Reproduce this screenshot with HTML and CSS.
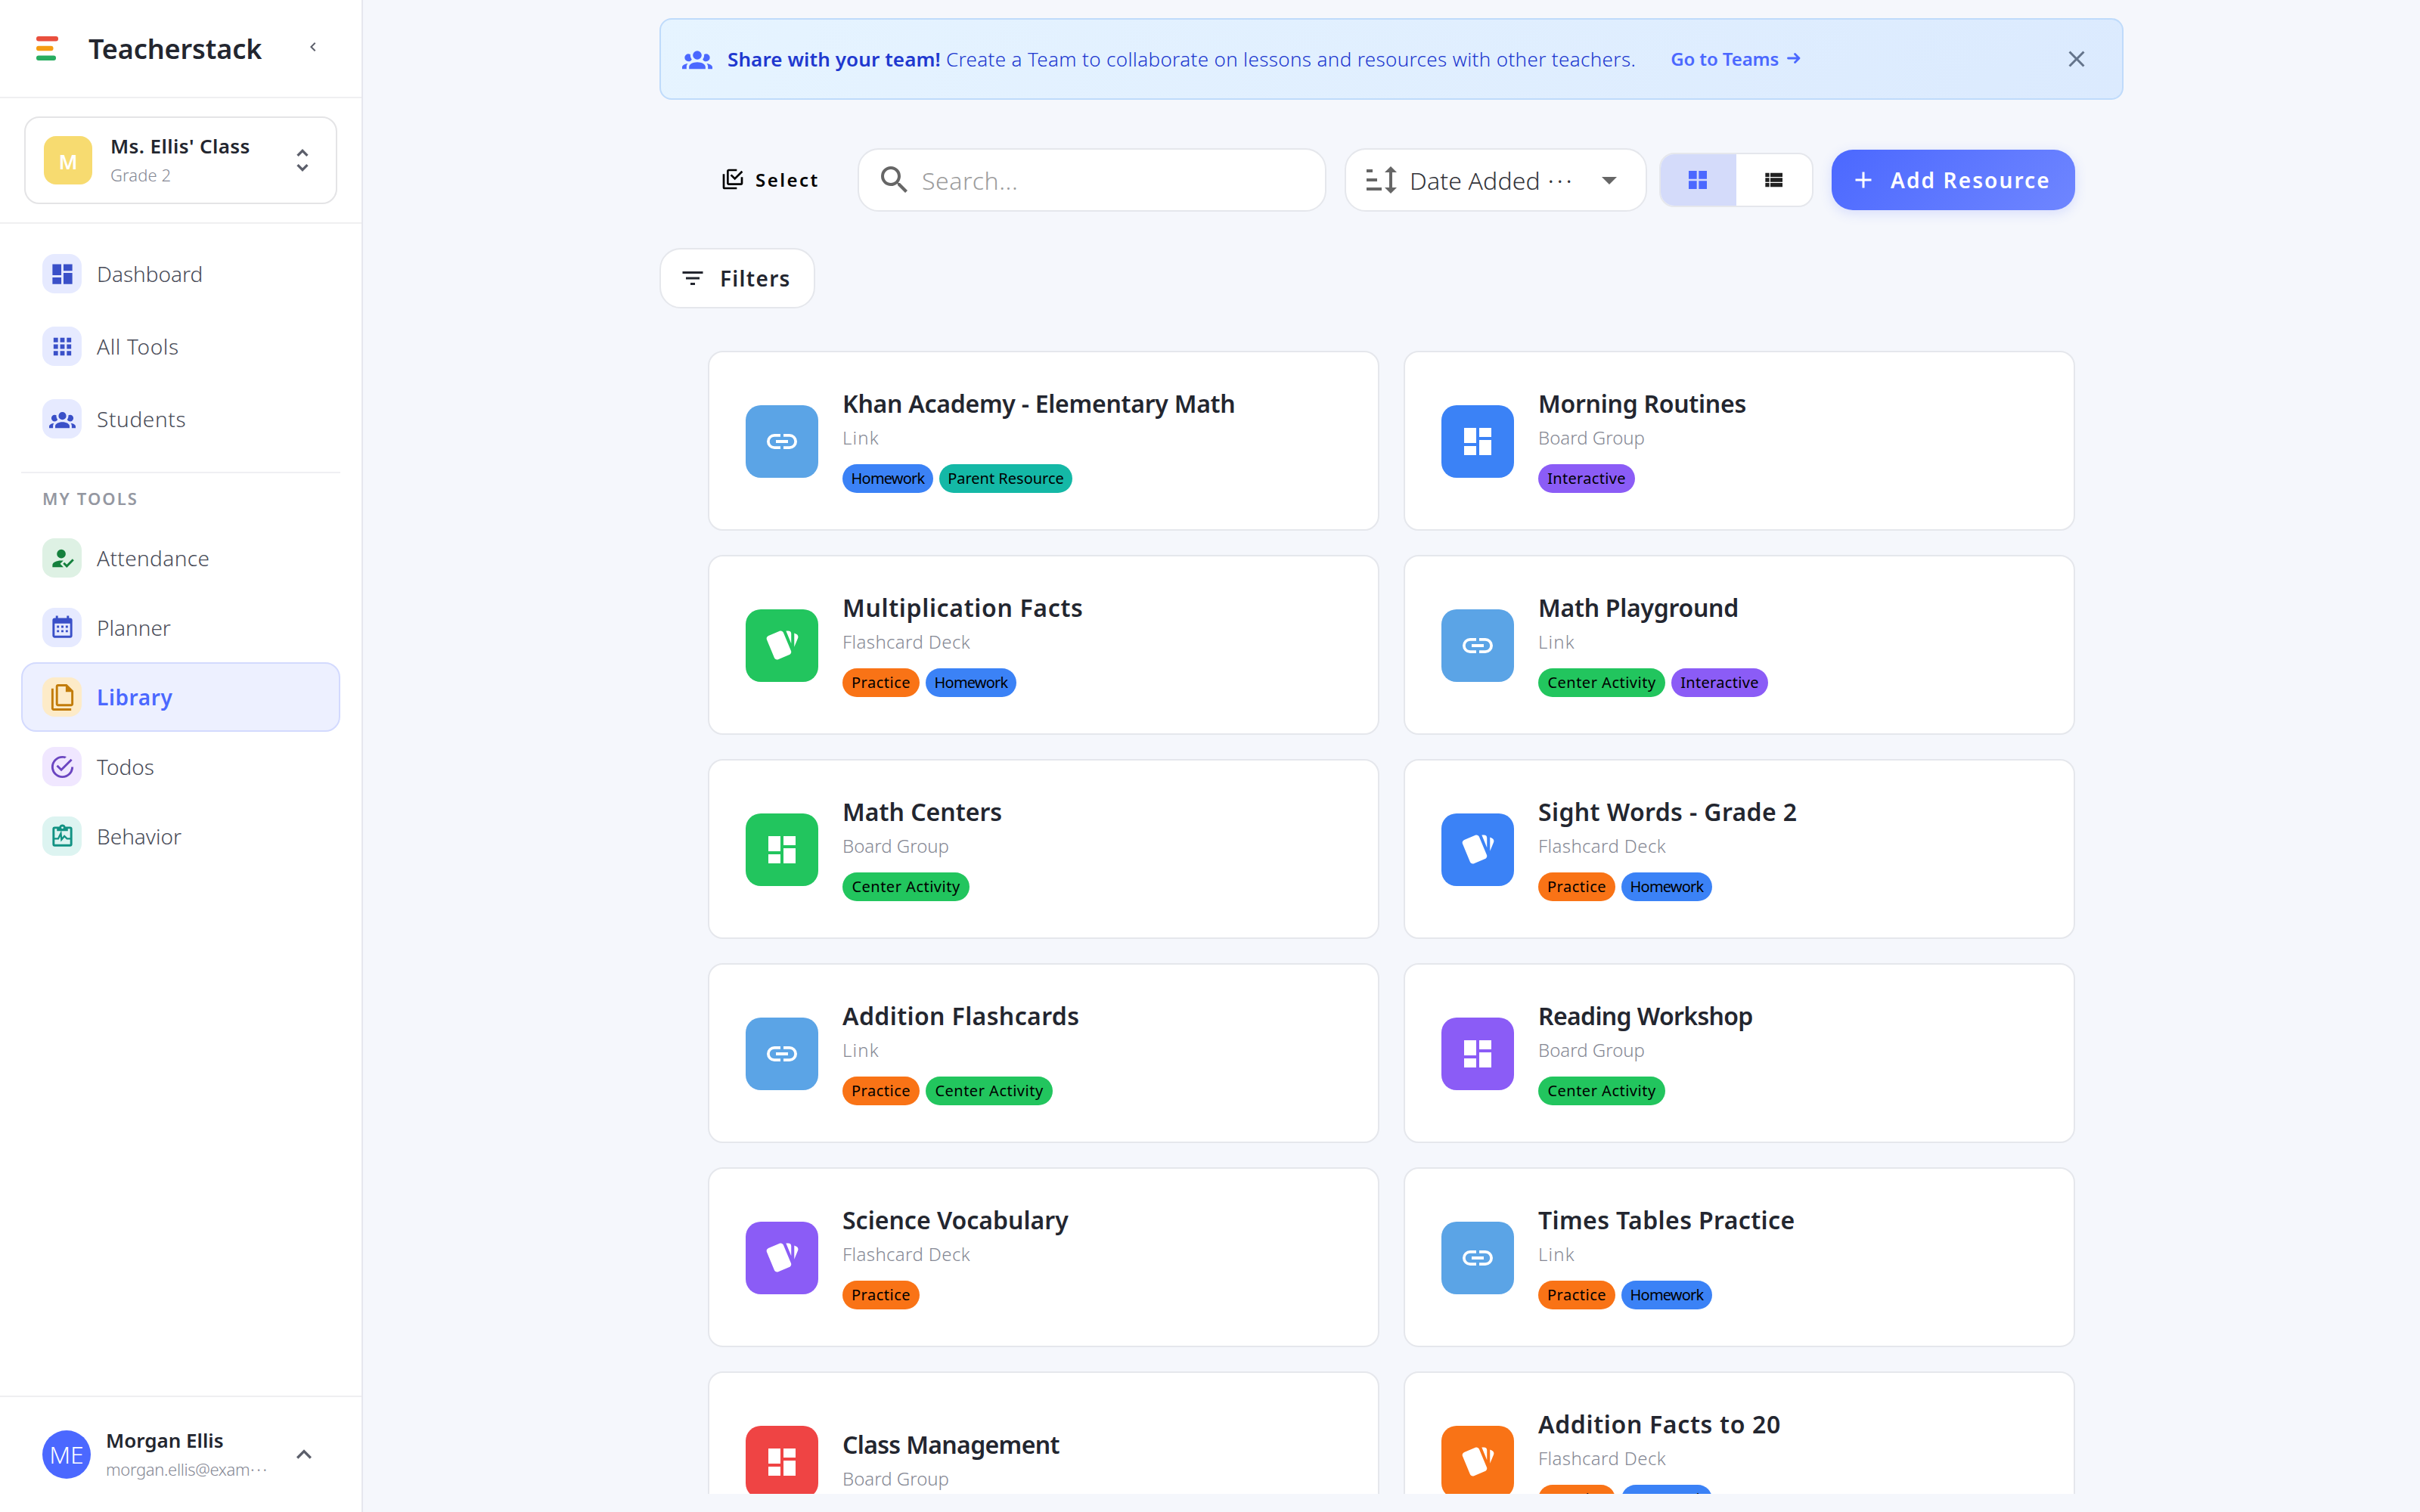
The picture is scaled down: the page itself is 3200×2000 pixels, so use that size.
FILE: index.html
```
<!DOCTYPE html>
<html lang="en">
<head>
    <meta charset="utf-8">
    <title>Teacherstack - Library</title>
    <link rel="stylesheet" href="styles.css">
</head>
<body>
    <!-- Icon set -->
    <svg class="sprite">
        <symbol id="i-dashboard" viewBox="0 0 24 24"><path d="M13,3V9H21V3M13,21H21V11H13M3,21H11V15H3M3,13H11V3H3V13Z"/></symbol>
        <symbol id="i-apps" viewBox="0 0 24 24"><path d="M16,20H20V16H16M16,14H20V10H16M10,8H14V4H10M16,8H20V4H16M10,14H14V10H10M4,14H8V10H4M4,20H8V16H4M10,20H14V16H10M4,8H8V4H4V8Z"/></symbol>
        <symbol id="i-group" viewBox="0 0 24 24"><path d="M12,5.5A3.5,3.5 0 0,1 15.5,9A3.5,3.5 0 0,1 12,12.5A3.5,3.5 0 0,1 8.5,9A3.5,3.5 0 0,1 12,5.5M5,8C5.56,8 6.08,8.15 6.53,8.42C6.38,9.85 6.8,11.27 7.66,12.38C7.16,13.34 6.16,14 5,14A3,3 0 0,1 2,11A3,3 0 0,1 5,8M19,8A3,3 0 0,1 22,11A3,3 0 0,1 19,14C17.84,14 16.84,13.34 16.34,12.38C17.2,11.27 17.62,9.85 17.47,8.42C17.92,8.15 18.44,8 19,8M5.5,18.25C5.5,16.18 8.41,14.5 12,14.5C15.59,14.5 18.5,16.18 18.5,18.25V20H5.5V18.25M0,20V18.5C0,17.11 1.89,15.94 4.45,15.6C3.86,16.28 3.5,17.22 3.5,18.25V20H0M24,20H20.5V18.25C20.5,17.22 20.14,16.28 19.55,15.6C22.11,15.94 24,17.11 24,18.5V20Z"/></symbol>
        <symbol id="i-account-check" viewBox="0 0 24 24"><path d="M21.1,12.5L22.5,13.91L15.97,20.5L12.5,17L13.9,15.59L15.97,17.67L21.1,12.5M10,17L13,20H3V18C3,15.79 6.58,14 11,14L12.89,14.11L10,17M11,4A4,4 0 0,1 15,8A4,4 0 0,1 11,12A4,4 0 0,1 7,8A4,4 0 0,1 11,4Z"/></symbol>
        <symbol id="i-calendar" viewBox="0 0 24 24"><path d="M9,10V12H7V10H9M13,10V12H11V10H13M17,10V12H15V10H17M19,3A2,2 0 0,1 21,5V19A2,2 0 0,1 19,21H5C3.89,21 3,20.1 3,19V5A2,2 0 0,1 5,3H6V1H8V3H16V1H18V3H19M19,19V8H5V19H19M9,14V16H7V14H9M13,14V16H11V14H13M17,14V16H15V14H17Z"/></symbol>
        <symbol id="i-files" viewBox="0 0 24 24"><path d="M16,0H8C6.9,0 6,0.9 6,2V18C6,19.1 6.9,20 8,20H20C21.1,20 22,19.1 22,18V6L16,0M20,18H8V2H15V7H20V18M4,4V22H20V24H4C2.9,24 2,23.1 2,22V4H4Z"/></symbol>
        <symbol id="i-check-circle" viewBox="0 0 24 24"><path d="M20,12A8,8 0 0,1 12,20A8,8 0 0,1 4,12A8,8 0 0,1 12,4C12.76,4 13.5,4.11 14.2,4.31L15.77,2.74C14.61,2.26 13.34,2 12,2A10,10 0 0,0 2,12A10,10 0 0,0 12,22A10,10 0 0,0 22,12M7.91,10.08L6.5,11.5L11,16L21,6L19.59,4.58L11,13.17L7.91,10.08Z"/></symbol>
        <symbol id="i-pulse" viewBox="0 0 24 24">
            <path fill-rule="evenodd" d="M19,3H14.82C14.4,1.84 13.3,1 12,1S9.6,1.84 9.18,3H5A2,2 0 0,0 3,5V19A2,2 0 0,0 5,21H19A2,2 0 0,0 21,19V5A2,2 0 0,0 19,3M12,3A1,1 0 0,1 12,5A1,1 0 0,1 12,3M5,5H7V7H17V5H19V19H5Z"/>
            <path fill="none" stroke="currentColor" stroke-width="1.6" d="M4,14H8.2L10.6,9.2L11.2,14.8L13.8,11.6L16.2,14H20"/>
        </symbol>
        <symbol id="i-chevron-up" viewBox="0 0 24 24"><path d="M7.41,15.41L12,10.83L16.59,15.41L18,14L12,8L6,14L7.41,15.41Z"/></symbol>
        <symbol id="i-chevron-left" viewBox="0 0 24 24"><path d="M15.41,16.58L10.83,12L15.41,7.41L14,6L8,12L14,18L15.41,16.58Z"/></symbol>
        <symbol id="i-unfold" viewBox="0 0 24 24"><path d="M12,18.17L8.83,15L7.42,16.41L12,21L16.59,16.41L15.17,15M12,5.83L15.17,9L16.58,7.59L12,3L7.41,7.59L8.83,9L12,5.83Z"/></symbol>
        <symbol id="i-magnify" viewBox="0 0 24 24"><path d="M9.5,3A6.5,6.5 0 0,1 16,9.5C16,11.11 15.41,12.59 14.44,13.73L14.71,14H15.5L20.5,19L19,20.5L14,15.5V14.71L13.73,14.44C12.59,15.41 11.11,16 9.5,16A6.5,6.5 0 0,1 3,9.5A6.5,6.5 0 0,1 9.5,3M9.5,5C7,5 5,7 5,9.5C5,12 7,14 9.5,14C12,14 14,12 14,9.5C14,7 12,5 9.5,5Z"/></symbol>
        <symbol id="i-sort" viewBox="0 0 24 24"><path d="M18,21L14,17H17V7H14L18,3L22,7H19V17H22M2,19V17H12V19M2,13V11H9V13M2,7V5H6V7H2Z"/></symbol>
        <symbol id="i-menu-down" viewBox="0 0 24 24"><path d="M7,10L12,15L17,10H7Z"/></symbol>
        <symbol id="i-grid" viewBox="0 0 24 24"><path d="M3,11H11V3H3M3,21H11V13H3M13,21H21V13H13M13,3V11H21V3"/></symbol>
        <symbol id="i-list" viewBox="0 0 24 24"><path d="M9,5V9H21V5M9,19H21V15H9M9,14H21V10H9M4,9H8V5H4M4,19H8V15H4M4,14H8V10H4V14Z"/></symbol>
        <symbol id="i-plus" viewBox="0 0 24 24"><path d="M19,13H13V19H11V13H5V11H11V5H13V11H19V13Z"/></symbol>
        <symbol id="i-close" viewBox="0 0 24 24"><path d="M19,6.41L17.59,5L12,10.59L6.41,5L5,6.41L10.59,12L5,17.59L6.41,19L12,13.41L17.59,19L19,17.59L13.41,12L19,6.41Z"/></symbol>
        <symbol id="i-filter" viewBox="0 0 24 24"><path d="M6,13H18V11H6M3,6V8H21V6M10,18H14V16H10V18Z"/></symbol>
        <symbol id="i-select" viewBox="0 0 24 24"><path d="M20,16V10H22V16A2,2 0 0,1 20,18H8C6.89,18 6,17.1 6,16V4C6,2.89 6.89,2 8,2H16V4H8V16H20M10.91,7.08L14,10.17L20.59,3.58L22,5L14,13L9.5,8.5L10.91,7.08M16,20V22H4A2,2 0 0,1 2,20V7H4V20H16Z"/></symbol>
        <symbol id="i-link" viewBox="0 0 24 24"><path d="M3.9,12C3.9,10.29 5.29,8.9 7,8.9H11V7H7A5,5 0 0,0 2,12A5,5 0 0,0 7,17H11V15.1H7C5.29,15.1 3.9,13.71 3.9,12M8,13H16V11H8V13M17,7H13V8.9H17C18.71,8.9 20.1,10.29 20.1,12C20.1,13.71 18.71,15.1 17,15.1H13V17H17A5,5 0 0,0 22,12A5,5 0 0,0 17,7Z"/></symbol>
        <symbol id="i-cards" viewBox="0 0 24 24"><path d="M21.47,4.35L20.13,3.79V12.82L22.56,6.96C22.97,5.94 22.5,4.77 21.47,4.35M1.97,8.05L6.93,20C7.24,20.77 7.97,21.24 8.74,21.26C9,21.26 9.27,21.21 9.53,21.1L16.9,18.05C17.65,17.74 18.11,17 18.13,16.26C18.14,16 18.09,15.71 18,15.45L13,3.5C12.71,2.73 11.97,2.26 11.19,2.25C10.93,2.25 10.67,2.31 10.42,2.4L3.06,5.45C2.04,5.87 1.55,7.04 1.97,8.05M18.12,4.25A2,2 0 0,0 16.12,2.25H14.67L18.12,10.59"/></symbol>
    </svg>

    <div class="app">
        <aside class="sidebar">
            <div class="brand">
                <svg class="logo" viewBox="0 0 30 32">
                    <rect width="29" height="6.5" rx="3" fill="#e94f3d"/>
                    <rect y="12.75" width="22.5" height="6.5" rx="3" fill="#f59c12"/>
                    <rect y="25.5" width="26" height="6.5" rx="3" fill="#28ad60"/>
                </svg>
                <span class="brand-name">Teacherstack</span>
                <svg class="icon brand-toggle"><use href="#i-chevron-left"/></svg>
            </div>

            <div class="class-picker">
                <div class="class-card">
                    <div class="class-avatar">M</div>
                    <div class="class-text">
                        <div class="class-name">Ms. Ellis' Class</div>
                        <div class="class-grade">Grade 2</div>
                    </div>
                    <svg class="icon icon-40 muted"><use href="#i-unfold"/></svg>
                </div>
            </div>

            <nav class="nav nav-main">
                <a class="nav-item"><span class="nav-icon blue"><svg class="icon"><use href="#i-dashboard"/></svg></span><span>Dashboard</span></a>
                <a class="nav-item"><span class="nav-icon blue"><svg class="icon"><use href="#i-apps"/></svg></span><span class="ls-wide">All Tools</span></a>
                <a class="nav-item"><span class="nav-icon blue"><svg class="icon"><use href="#i-group"/></svg></span><span class="ls-wide">Students</span></a>
            </nav>
            <nav class="nav nav-tools">
                <div class="nav-title">MY TOOLS</div>
                <a class="nav-item"><span class="nav-icon green"><svg class="icon"><use href="#i-account-check"/></svg></span><span class="ls-mid">Attendance</span></a>
                <a class="nav-item"><span class="nav-icon blue"><svg class="icon"><use href="#i-calendar"/></svg></span><span>Planner</span></a>
                <a class="nav-item active"><span class="nav-icon amber"><svg class="icon"><use href="#i-files"/></svg></span><span class="ls-mid">Library</span></a>
                <a class="nav-item"><span class="nav-icon purple"><svg class="icon"><use href="#i-check-circle"/></svg></span><span>Todos</span></a>
                <a class="nav-item"><span class="nav-icon teal"><svg class="icon"><use href="#i-pulse"/></svg></span><span>Behavior</span></a>
            </nav>

            <div class="user">
                <div class="user-avatar">ME</div>
                <div class="user-text">
                    <div class="user-name">Morgan Ellis</div>
                    <div class="user-mail">morgan.ellis@exam<span class="dots">…</span></div>
                </div>
                <svg class="icon icon-40 muted"><use href="#i-chevron-up"/></svg>
            </div>
        </aside>

        <main class="main">
            <div class="page">
                <div class="banner">
                    <svg class="icon icon-40 banner-icon"><use href="#i-group"/></svg>
                    <div class="banner-text"><strong>Share with your team!</strong> Create a Team to collaborate on lessons and resources with other teachers.</div>
                    <a class="banner-link">Go to Teams <svg class="arrow" viewBox="0 0 18 16"><path d="M1.5,8H16M10.5,2.5L16,8L10.5,13.5"/></svg></a>
                    <svg class="icon icon-36 banner-close"><use href="#i-close"/></svg>
                </div>

                <div class="toolbar">
                    <button class="select-btn"><svg class="icon"><use href="#i-select"/></svg>Select</button>
                    <div class="search"><svg class="icon icon-48"><use href="#i-magnify"/></svg><span>Search...</span></div>
                    <div class="sort">
                        <svg class="icon icon-48"><use href="#i-sort"/></svg>
                        <span class="sort-text">Date Added <span class="dots">…</span></span>
                        <svg class="icon icon-48"><use href="#i-menu-down"/></svg>
                    </div>
                    <div class="view-toggle">
                        <div class="view on"><svg class="icon icon-32"><use href="#i-grid"/></svg></div>
                        <div class="view"><svg class="icon icon-32"><use href="#i-list"/></svg></div>
                    </div>
                    <button class="add-btn"><svg class="icon icon-36"><use href="#i-plus"/></svg>Add Resource</button>
                </div>

                <button class="filters-btn"><svg class="icon icon-36"><use href="#i-filter"/></svg>Filters</button>

                <div class="grid">
                    <div class="card">
                        <div class="tile sky"><svg class="icon icon-48"><use href="#i-link"/></svg></div>
                        <div class="card-body">
                            <h3 class="ls-tight">Khan Academy - Elementary Math</h3>
                            <p class="ls-link">Link</p>
                            <div class="tags"><span class="tag homework">Homework</span><span class="tag parent">Parent Resource</span></div>
                        </div>
                    </div>
                    <div class="card">
                        <div class="tile blue-bg"><svg class="icon icon-48"><use href="#i-dashboard"/></svg></div>
                        <div class="card-body">
                            <h3 class="ls-tight">Morning Routines</h3>
                            <p>Board Group</p>
                            <div class="tags"><span class="tag interactive">Interactive</span></div>
                        </div>
                    </div>
                    <div class="card">
                        <div class="tile green-bg"><svg class="icon icon-48"><use href="#i-cards"/></svg></div>
                        <div class="card-body">
                            <h3 class="ls-wide">Multiplication Facts</h3>
                            <p class="ls-mid">Flashcard Deck</p>
                            <div class="tags"><span class="tag practice">Practice</span><span class="tag homework">Homework</span></div>
                        </div>
                    </div>
                    <div class="card">
                        <div class="tile sky"><svg class="icon icon-48"><use href="#i-link"/></svg></div>
                        <div class="card-body">
                            <h3 class="ls-tight">Math Playground</h3>
                            <p class="ls-link">Link</p>
                            <div class="tags"><span class="tag center">Center Activity</span><span class="tag interactive">Interactive</span></div>
                        </div>
                    </div>
                    <div class="card">
                        <div class="tile green-bg"><svg class="icon icon-48"><use href="#i-dashboard"/></svg></div>
                        <div class="card-body">
                            <h3>Math Centers</h3>
                            <p>Board Group</p>
                            <div class="tags"><span class="tag center">Center Activity</span></div>
                        </div>
                    </div>
                    <div class="card">
                        <div class="tile blue-bg"><svg class="icon icon-48"><use href="#i-cards"/></svg></div>
                        <div class="card-body">
                            <h3 class="ls-mid">Sight Words - Grade 2</h3>
                            <p class="ls-mid">Flashcard Deck</p>
                            <div class="tags"><span class="tag practice">Practice</span><span class="tag homework">Homework</span></div>
                        </div>
                    </div>
                    <div class="card">
                        <div class="tile sky"><svg class="icon icon-48"><use href="#i-link"/></svg></div>
                        <div class="card-body">
                            <h3 class="ls-mid">Addition Flashcards</h3>
                            <p class="ls-link">Link</p>
                            <div class="tags"><span class="tag practice">Practice</span><span class="tag center">Center Activity</span></div>
                        </div>
                    </div>
                    <div class="card">
                        <div class="tile purple-bg"><svg class="icon icon-48"><use href="#i-dashboard"/></svg></div>
                        <div class="card-body">
                            <h3 class="ls-xtight">Reading Workshop</h3>
                            <p>Board Group</p>
                            <div class="tags"><span class="tag center">Center Activity</span></div>
                        </div>
                    </div>
                    <div class="card">
                        <div class="tile purple-bg"><svg class="icon icon-48"><use href="#i-cards"/></svg></div>
                        <div class="card-body">
                            <h3>Science Vocabulary</h3>
                            <p class="ls-mid">Flashcard Deck</p>
                            <div class="tags"><span class="tag practice">Practice</span></div>
                        </div>
                    </div>
                    <div class="card">
                        <div class="tile sky"><svg class="icon icon-48"><use href="#i-link"/></svg></div>
                        <div class="card-body">
                            <h3 class="ls-mid">Times Tables Practice</h3>
                            <p class="ls-link">Link</p>
                            <div class="tags"><span class="tag practice">Practice</span><span class="tag homework">Homework</span></div>
                        </div>
                    </div>
                    <div class="card">
                        <div class="tile red-bg"><svg class="icon icon-48"><use href="#i-dashboard"/></svg></div>
                        <div class="card-body">
                            <h3 class="ls-xtight">Class Management</h3>
                            <p>Board Group</p>
                        </div>
                    </div>
                    <div class="card">
                        <div class="tile orange-bg"><svg class="icon icon-48"><use href="#i-cards"/></svg></div>
                        <div class="card-body">
                            <h3 class="ls-wide">Addition Facts to 20</h3>
                            <p class="ls-mid">Flashcard Deck</p>
                            <div class="tags"><span class="tag practice">Practice</span><span class="tag homework">Homework</span></div>
                        </div>
                    </div>
                </div>
            </div>
        </main>
    </div>
</body>
</html>
```

FILE: styles.css
```
* { box-sizing: border-box; }
body {
    margin: 0;
    background: #f5f7fc;
    color: #23262f;
    font-family: "Noto Sans", "Open Sans", sans-serif;
    font-weight: 300;
}
button { font: inherit; border: none; background: none; padding: 0; color: inherit; }
h3, p { margin: 0; }

.sprite { display: none; }
.icon { width: 35px; height: 35px; fill: currentColor; flex: none; display: block; }
.icon-32 { width: 32px; height: 32px; }
.icon-36 { width: 36px; height: 36px; }
.icon-40 { width: 40px; height: 40px; }
.icon-48 { width: 48px; height: 48px; }
.muted { color: #5c5f6b; }
.dots { font-family: "Noto Sans CJK JP", sans-serif; line-height: 0; letter-spacing: 0; vertical-align: 0.27em; }

/* letter spacing helpers */
.ls-xtight { letter-spacing: -0.65px; }
.ls-tight { letter-spacing: -0.27px; }
.ls-mid { letter-spacing: 0.38px; }
.ls-wide { letter-spacing: 0.65px; }
.ls-link { letter-spacing: 1.2px; }

.app { display: flex; height: 2000px; overflow: hidden; }

/* Sidebar */
.sidebar {
    width: 480px;
    flex: none;
    display: flex;
    flex-direction: column;
    background: #fff;
    border-right: 2px solid #e6e7ee;
}
.brand {
    display: flex;
    align-items: center;
    height: 130px;
    padding: 0 52px 0 48px;
    border-bottom: 2px solid #efeff1;
}
.logo { width: 30px; height: 32px; }
.brand-name { margin-left: 39px; padding-top: 1px; font-size: 36px; font-weight: 600; letter-spacing: -0.1px; }
.brand-toggle { width: 24px; height: 24px; margin-left: auto; margin-bottom: 4px; color: #5c5f6b; }

.class-picker { padding: 24px 32px; border-bottom: 2px solid #efeff1; height: 166px; }
.class-card {
    display: flex;
    align-items: center;
    height: 116px;
    padding: 0 24px;
    border: 2px solid #e4e4e6;
    border-radius: 20px;
}
.class-avatar {
    width: 64px;
    height: 64px;
    border-radius: 16px;
    background: #f7db70;
    color: #fff;
    font-size: 27px;
    font-weight: 600;
    line-height: 67px;
    text-align: center;
}
.class-text { flex: 1; margin-left: 24px; line-height: 38px; }
.class-name { font-size: 26px; font-weight: 600; letter-spacing: 0.4px; }
.class-grade { font-size: 22px; color: #858894; letter-spacing: 0.1px; }

.nav { padding: 0 28px; }
.nav-main { padding-top: 18px; }
.nav-main .nav-item { height: 96px; }
.nav-item {
    display: flex;
    align-items: center;
    height: 92px;
    padding-left: 26px;
    border: 2px solid transparent;
    border-radius: 20px;
    font-size: 28px;
    color: #484b57;
}
.nav-icon {
    display: flex;
    align-items: center;
    justify-content: center;
    width: 52px;
    height: 52px;
    margin-right: 20px;
    border-radius: 16px;
}
.nav-item.active { background: #edf0ff; border-color: #d3dafe; color: #4b68ff; font-weight: 600; }
.nav-item.active .ls-mid { letter-spacing: 0.6px; }
.blue { background: #e6eaff; color: #3a50c8; }
.green { background: #def1e4; color: #15803d; }
.amber { background: #fdebc8; color: #c27c0a; }
.purple { background: #f0e7ff; color: #6b46c1; }
.teal { background: #ddf4f1; color: #129283; }
.nav-tools { flex: 1; padding-top: 22px; }
.nav-title {
    height: 68px;
    padding: 16px 0 0 28px;
    border-top: 2px solid #efeff3;
    font-size: 22px;
    font-weight: 600;
    line-height: 34px;
    letter-spacing: 2.1px;
    color: #9497a1;
}

.user {
    display: flex;
    align-items: center;
    height: 154px;
    padding: 0 56px;
    border-top: 2px solid #efeff1;
}
.user-avatar {
    width: 64px;
    height: 64px;
    border-radius: 50%;
    background: #4b68ff;
    color: #fff;
    font-size: 32px;
    line-height: 64px;
    text-align: center;
}
.user-text { flex: 1; margin-left: 20px; line-height: 38px; white-space: nowrap; }
.user-name { font-size: 26px; font-weight: 600; }
.user-mail { font-size: 22px; height: 38px; color: #858894; letter-spacing: -0.35px; }

/* Main area */
.main { flex: 1; padding: 24px 0; overflow: hidden; }
.page { width: 1936px; height: 1952px; margin: 0 auto; overflow: hidden; }

.banner {
    display: flex;
    align-items: center;
    height: 108px;
    padding: 0 42px 0 28px;
    border: 2px solid #bfdbfb;
    border-radius: 16px;
    background: linear-gradient(135deg, #e6f4ff, #dbeafe);
    color: #2038cf;
    font-size: 26px;
}
.banner-icon { color: #4b68ff; }
.banner-text { margin-left: 20px; letter-spacing: 0.35px; white-space: nowrap; }
.banner-text strong { font-weight: 600; letter-spacing: 0.1px; }
.banner-link {
    display: flex;
    align-items: center;
    margin-left: 46px;
    margin-bottom: 2px;
    color: #4b68ff;
    font-size: 24px;
    font-weight: 600;
    letter-spacing: -0.1px;
}
.arrow { width: 18px; height: 16px; margin-left: 11px; fill: none; stroke: currentColor; stroke-width: 2.8; stroke-linecap: round; stroke-linejoin: round; }
.banner-close { margin-left: auto; color: #64748b; }

.toolbar { display: flex; align-items: center; height: 84px; margin-top: 64px; padding: 0 64px; }
.select-btn {
    display: flex;
    align-items: center;
    width: 174px;
    padding: 0 0 2px 17px;
    color: #000;
    font-size: 24px;
    font-weight: 600;
    letter-spacing: 2.5px;
}
.select-btn .icon { width: 32px; height: 32px; margin-right: 14px; }
.search, .sort {
    display: flex;
    align-items: center;
    height: 84px;
    margin-left: 24px;
    padding: 0 24px 0 23px;
    border: 2px solid #e5e7ec;
    border-radius: 28px;
    background: #fff;
    color: #666;
    font-size: 32px;
}
.search { width: 620px; }
.search span { margin-left: 12px; color: #9c9c9c; letter-spacing: 0.6px; }
.sort { width: 400px; }
.sort-text { flex: 1; margin-left: 13px; color: #33343a; letter-spacing: 0.15px; white-space: nowrap; }
.view-toggle {
    display: flex;
    width: 204px;
    height: 72px;
    margin-left: 16px;
    border: 2px solid #e5e7ec;
    border-radius: 20px;
    background: #fff;
    overflow: hidden;
}
.view { flex: 1; display: flex; align-items: center; justify-content: center; padding-right: 2px; color: #212121; }
.view.on { background: #d4dbfa; color: #4b68ff; }
.add-btn {
    display: flex;
    align-items: center;
    width: 322px;
    height: 80px;
    margin-left: 24px;
    padding-left: 24px;
    border-radius: 28px;
    background: linear-gradient(135deg, #4b68ff, #6f86ff);
    box-shadow: 0 4px 16px rgba(75, 104, 255, 0.18);
    color: #fff;
    font-size: 28px;
    font-weight: 600;
    letter-spacing: 2.1px;
    white-space: nowrap;
}
.add-btn .icon { margin-right: 18px; }

.filters-btn {
    display: flex;
    align-items: center;
    width: 206px;
    height: 80px;
    margin-top: 48px;
    padding-left: 24px;
    border: 2px solid #e5e7ec;
    border-radius: 28px;
    background: #fff;
    font-size: 28px;
    font-weight: 600;
    letter-spacing: 1.3px;
}
.filters-btn .icon { margin-right: 18px; }

/* Resource cards */
.grid {
    display: grid;
    grid-template-columns: 888px 888px;
    gap: 32px;
    margin-top: 56px;
    padding: 0 64px;
}
.card {
    display: flex;
    align-items: center;
    height: 238px;
    padding: 2px 48px 0;
    border: 2px solid #e5e7ec;
    border-radius: 20px;
    background: #fff;
}
.tile {
    display: flex;
    align-items: center;
    justify-content: center;
    width: 96px;
    height: 96px;
    margin-right: 32px;
    border-radius: 20px;
    color: #fff;
}
.sky { background: #5ba4e6; }
.blue-bg { background: #3b82f6; }
.green-bg { background: #22c55e; }
.purple-bg { background: #8b5cf6; }
.red-bg { background: #ef4444; }
.orange-bg { background: #f97316; }
.card-body { padding-bottom: 4px; }
.card-body h3 { font-size: 32px; font-weight: 600; line-height: 48px; }
.card-body p { font-size: 24px; line-height: 42px; color: #858894; }
.tags { display: flex; gap: 8px; margin: 14px 0 2px; }
.tag {
    height: 38px;
    border-radius: 19px;
    color: #000;
    font-size: 20px;
    font-weight: 400;
    line-height: 37px;
    text-align: center;
    white-space: nowrap;
}
.homework { width: 120px; background: #3b82f6; letter-spacing: -0.8px; }
.parent { width: 176px; background: #14b8a6; }
.practice { width: 102px; background: #f97316; letter-spacing: 0.5px; }
.interactive { width: 128px; background: #8b5cf6; letter-spacing: 0.3px; }
.center { width: 168px; background: #22c55e; letter-spacing: 0.5px; }
```
